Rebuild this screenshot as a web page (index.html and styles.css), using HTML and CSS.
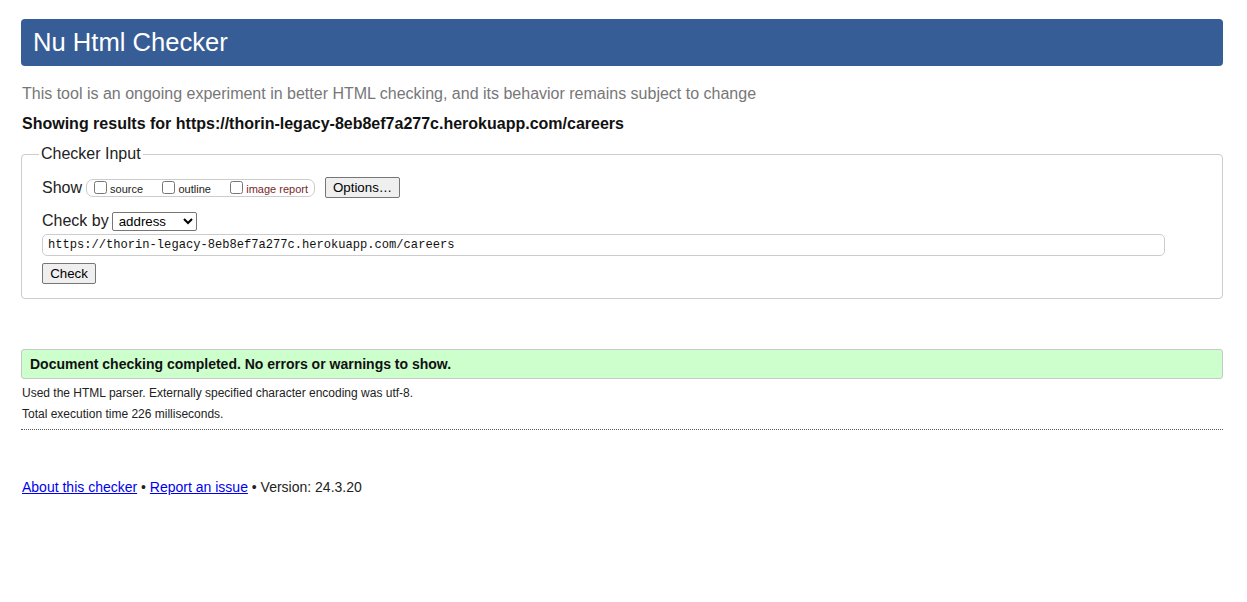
FILE: index.html
```html
<!DOCTYPE html>
<html lang="en">
<head>
<meta charset="utf-8">
<title>Showing results for https://thorin-legacy-8eb8ef7a277c.herokuapp.com/careers - Nu Html Checker</title>
<link rel="stylesheet" href="styles.css">
</head>
<body>
<div class="page">
  <h1 class="title">Nu Html Checker</h1>
  <p class="tagline">This tool is an ongoing experiment in better HTML checking, and its behavior remains subject to change</p>
  <p class="showing">Showing results for https://thorin-legacy-8eb8ef7a277c.herokuapp.com/careers</p>

  <fieldset class="input-box">
    <legend class="legend">Checker Input</legend>
    <div class="row row-show">
      <span class="row-label">Show</span>
      <span class="checks">
        <label class="check"><input type="checkbox"><span>source</span></label>
        <label class="check"><input type="checkbox"><span>outline</span></label>
        <label class="check"><input type="checkbox"><span class="red">image report</span></label>
      </span>
      <button class="btn btn-options" type="button">Options…</button>
    </div>
    <div class="row row-by">
      <span class="row-label">Check by</span>
      <select class="select"><option>address</option><option>file upload</option><option>text input</option></select>
    </div>
    <div class="row row-url">
      <input class="url" type="text" value="https://thorin-legacy-8eb8ef7a277c.herokuapp.com/careers">
    </div>
    <div class="row row-submit">
      <button class="btn btn-check" type="button">Check</button>
    </div>
  </fieldset>

  <p class="success">Document checking completed. No errors or warnings to show.</p>
  <p class="details">Used the HTML parser. Externally specified character encoding was utf-8.</p>
  <p class="details">Total execution time 226 milliseconds.</p>
  <hr class="rule">

  <p class="footer"><a href="#">About this checker</a> • <a href="#">Report an issue</a> • Version: 24.3.20</p>
</div>
</body>
</html>
```

FILE: styles.css
```css
html, body {
  margin: 0;
  padding: 0;
  background: #fff;
}
body {
  font-family: "Liberation Sans", Arial, sans-serif;
  color: #222;
  font-size: 16px;
}
.page {
  margin: 19px 24px 0 21px;
}
.title {
  margin: 0;
  height: 47px;
  line-height: 47px;
  padding: 0 12px;
  background: #365d95;
  color: #fff;
  font-size: 25.6px;
  font-weight: normal;
  border-radius: 4px;
}
.tagline {
  margin: 19px 0 0 1px;
  line-height: 18px;
  color: #777;
  font-size: 16px;
}
.showing {
  margin: 12px 0 0 1px;
  line-height: 18px;
  font-weight: bold;
  font-size: 16px;
  color: #111;
}
.input-box {
  margin: 12px 0 0 0;
  padding: 0 20px 14px 20px;
  border: 1px solid #ccc;
  border-radius: 4px;
  min-width: 0;
}
.legend {
  margin-left: -3px;
  padding: 0 2px;
  line-height: 18px;
  font-size: 16px;
  color: #222;
}
.row {
  display: flex;
  align-items: center;
}
.row-show {
  margin-top: 14px;
  height: 21px;
}
.row-label {
  font-size: 16px;
  line-height: 18px;
  margin-right: 4px;
}
.checks {
  display: flex;
  align-items: center;
  height: 16px;
  border: 1px solid #ccc;
  border-radius: 7px;
  padding: 0 6px 0 6px;
  margin-right: 10px;
  width: 215px;
  justify-content: space-between;
}
.check {
  display: flex;
  align-items: center;
  font-size: 11px;
}
.check input {
  margin: 0 3px 0 1px;
  width: 13px;
  height: 13px;
}
.check span {
  position: relative;
  top: 1px;
}
.red {
  color: #7a1f1f;
}
.btn {
  font-family: "Liberation Sans", Arial, sans-serif;
  font-size: 13.3px;
  color: #000;
  background: #efefef;
  border: 1px solid #767676;
  border-radius: 2px;
  padding: 0 6px;
  height: 21px;
}
.btn-options {
  width: 75px;
}
.row-by {
  margin-top: 13px;
  height: 20px;
}
.row-by .row-label {
  margin-right: 2px;
}
.select {
  font-family: "Liberation Sans", Arial, sans-serif;
  font-size: 13.3px;
  width: 85px;
  height: 19px;
  margin-left: 1px;
  padding: 0 0 0 2px;
  border: 1px solid #767676;
  border-radius: 2px;
  background: #fff;
  color: #000;
}
.row-url {
  margin-top: 3px;
}
.url {
  box-sizing: border-box;
  width: 1123px;
  height: 22px;
  border: 1px solid #ccc;
  border-radius: 5px;
  padding: 0 5px;
  font-family: "Liberation Mono", "DejaVu Sans Mono", monospace;
  font-size: 12.1px;
  color: #111;
  outline: none;
}
.row-submit {
  margin-top: 7px;
}
.btn-check {
  width: 54px;
  font-size: 13.3px;
}
.success {
  margin: 50px 0 0 0;
  box-sizing: border-box;
  height: 30px;
  line-height: 28px;
  padding: 0 8px;
  background: #ccffcc;
  border: 1px solid #c8c8c8;
  border-radius: 3px;
  font-weight: bold;
  font-size: 14px;
  color: #111;
}
.details {
  margin: 7px 0 0 1px;
  line-height: 14px;
  font-size: 12px;
  color: #222;
}
.details + .details {
  margin-top: 7px;
}
.rule {
  margin: 8px 0 0 0;
  border: 0;
  border-top: 1px dotted #555;
  height: 0;
}
.footer {
  margin: 49px 0 0 1px;
  font-size: 14px;
  line-height: 16px;
  color: #222;
}
.footer a {
  color: #0000ee;
}
```
